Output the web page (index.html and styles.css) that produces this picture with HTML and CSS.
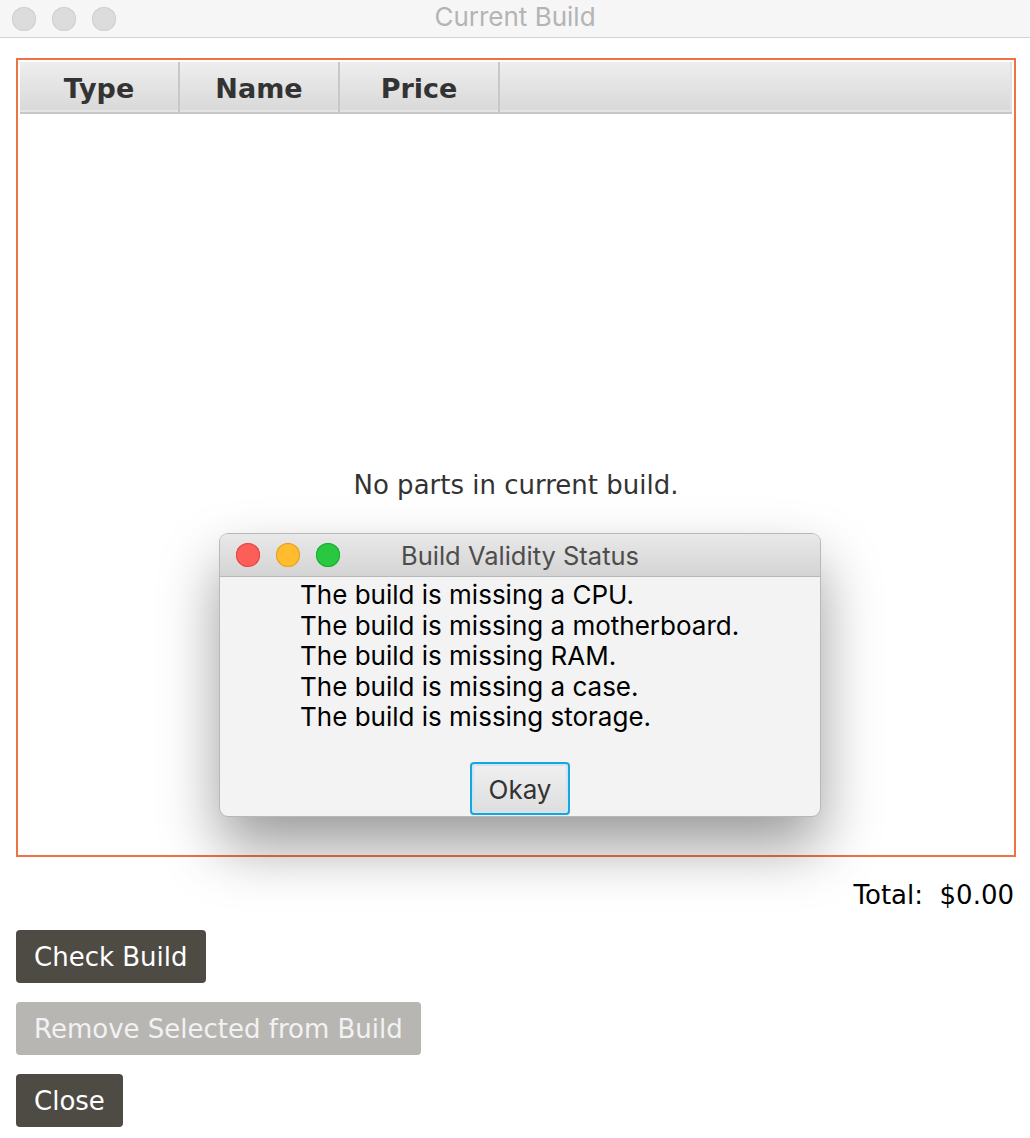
FILE: index.html
```html
<!DOCTYPE html>
<html lang="en">
<head>
    <meta charset="UTF-8">
    <title>Current Build</title>
    <link rel="stylesheet" href="styles.css">
</head>
<body>
    <div class="titlebar">
        <div class="lights">
            <span class="light"></span>
            <span class="light"></span>
            <span class="light"></span>
        </div>
        <div class="title">Current Build</div>
    </div>

    <div class="main">
        <!-- Tabela das peças -->
        <div class="table-box">
            <div class="table-head">
                <div class="col">Type</div>
                <div class="col">Name</div>
                <div class="col">Price</div>
                <div class="col col-fill"></div>
            </div>
            <div class="table-body">
                <p class="empty">No parts in current build.</p>
            </div>
        </div>

        <div class="total">Total:  $0.00</div>

        <div class="actions">
            <button class="btn">Check Build</button>
            <button class="btn btn-disabled">Remove Selected from Build</button>
            <button class="btn">Close</button>
        </div>
    </div>

    <!-- Diálogo de validação -->
    <div class="dialog">
        <div class="dialog-bar">
            <div class="lights">
                <span class="light red"></span>
                <span class="light yellow"></span>
                <span class="light green"></span>
            </div>
            <div class="dialog-title">Build Validity Status</div>
        </div>
        <div class="dialog-body">
            <p>The build is missing a CPU.</p>
            <p>The build is missing a motherboard.</p>
            <p>The build is missing RAM.</p>
            <p>The build is missing a case.</p>
            <p>The build is missing storage.</p>
        </div>
        <div class="dialog-foot">
            <button class="okay">Okay</button>
        </div>
    </div>
</body>
</html>
```

FILE: styles.css
```css
body {
    margin: 0;
    background-color: #fff;
    font-family: "DejaVu Sans", Verdana, sans-serif;
    color: #000;
}
.titlebar {
    height: 37px;
    background-color: #f6f6f6;
    border-bottom: 1px solid #d2d2d2;
    display: flex;
    align-items: center;
    position: relative;
}
.lights {
    display: flex;
    gap: 16px;
    padding-left: 12px;
}
.light {
    width: 24px;
    height: 24px;
    border-radius: 50%;
    background-color: #dcdcdc;
    box-shadow: inset 0 0 0 1px #d0d0d0;
}
.title {
    position: absolute;
    left: 0;
    right: 0;
    top: 0;
    line-height: 34px;
    text-align: center;
    font-family: Inter, "Noto Sans", sans-serif;
    font-size: 26px;
    color: #b4b4b4;
}
.main {
    padding: 20px 14px 0 16px;
}
.table-box {
    height: 791px;
    border: 2px solid #ec7444;
    padding: 2px;
    display: flex;
    flex-direction: column;
}
.table-head {
    display: flex;
    height: 50px;
    background: linear-gradient(#eeeeee, #d8d8d8);
    border-bottom: 2px solid #c6c6c6;
    box-shadow: inset 0 -2px 0 #e4e4e4;
}
.col {
    width: 158px;
    border-right: 2px solid #c8c8c8;
    display: flex;
    align-items: center;
    justify-content: center;
    font-weight: bold;
    font-size: 27px;
    color: #333;
    padding-top: 2px;
}
.col-fill {
    flex: 1;
    border-right: 2px solid #e2e2e2;
}
.table-body {
    flex: 1;
    display: flex;
    justify-content: center;
}
.empty {
    margin: 356px 0 0 0;
    font-size: 26px;
    color: #333;
}
.total {
    text-align: right;
    white-space: pre;
    font-size: 26px;
    padding: 23px 2px 0 0;
    height: 48px;
}
.actions {
    display: flex;
    flex-direction: column;
    align-items: flex-start;
    gap: 19px;
    padding-top: 2px;
}
.btn {
    font-family: "DejaVu Sans", Verdana, sans-serif;
    font-size: 26px;
    color: #fff;
    background-color: #4e4b44;
    border: none;
    border-radius: 4px;
    height: 53px;
    padding: 0 18px;
}
.btn-disabled {
    background-color: #b8b6b2;
    color: #f2f2f2;
}
.dialog {
    position: absolute;
    left: 220px;
    top: 534px;
    width: 600px;
    height: 282px;
    border-radius: 8px;
    background-color: #f3f3f3;
    box-shadow: 0 0 0 1px #b8b8b8, 0 30px 60px rgba(0, 0, 0, 0.4);
    overflow: hidden;
    font-family: Inter, "Noto Sans", sans-serif;
}
.dialog-bar {
    height: 42px;
    background: linear-gradient(#e9e9e9, #d4d4d4);
    border-bottom: 1px solid #b8b8b8;
    display: flex;
    align-items: center;
    position: relative;
}
.dialog-bar .lights {
    padding-left: 16px;
}
.light.red {
    background-color: #fd5e57;
    box-shadow: inset 0 0 0 1px #e0443e;
}
.light.yellow {
    background-color: #febc2e;
    box-shadow: inset 0 0 0 1px #dea123;
}
.light.green {
    background-color: #28c840;
    box-shadow: inset 0 0 0 1px #1aab29;
}
.dialog-title {
    position: absolute;
    left: 0;
    right: 0;
    text-align: center;
    font-size: 25.5px;
    color: #4d4d4d;
}
.dialog-body {
    padding: 3px 0 0 80px;
    height: 150px;
}
.dialog-body p {
    margin: 0;
    font-size: 26px;
    line-height: 30.5px;
}
.dialog-foot {
    display: flex;
    justify-content: center;
    padding-top: 32px;
}
.okay {
    font-family: Inter, "Noto Sans", sans-serif;
    font-size: 26px;
    color: #333;
    width: 100px;
    height: 53px;
    padding-top: 2px;
    border: 2px solid #18a4dc;
    border-radius: 4px;
    background: linear-gradient(#f0f0f0, #dedede);
    box-shadow: inset 0 0 0 2px #cfe6f1;
}
```
